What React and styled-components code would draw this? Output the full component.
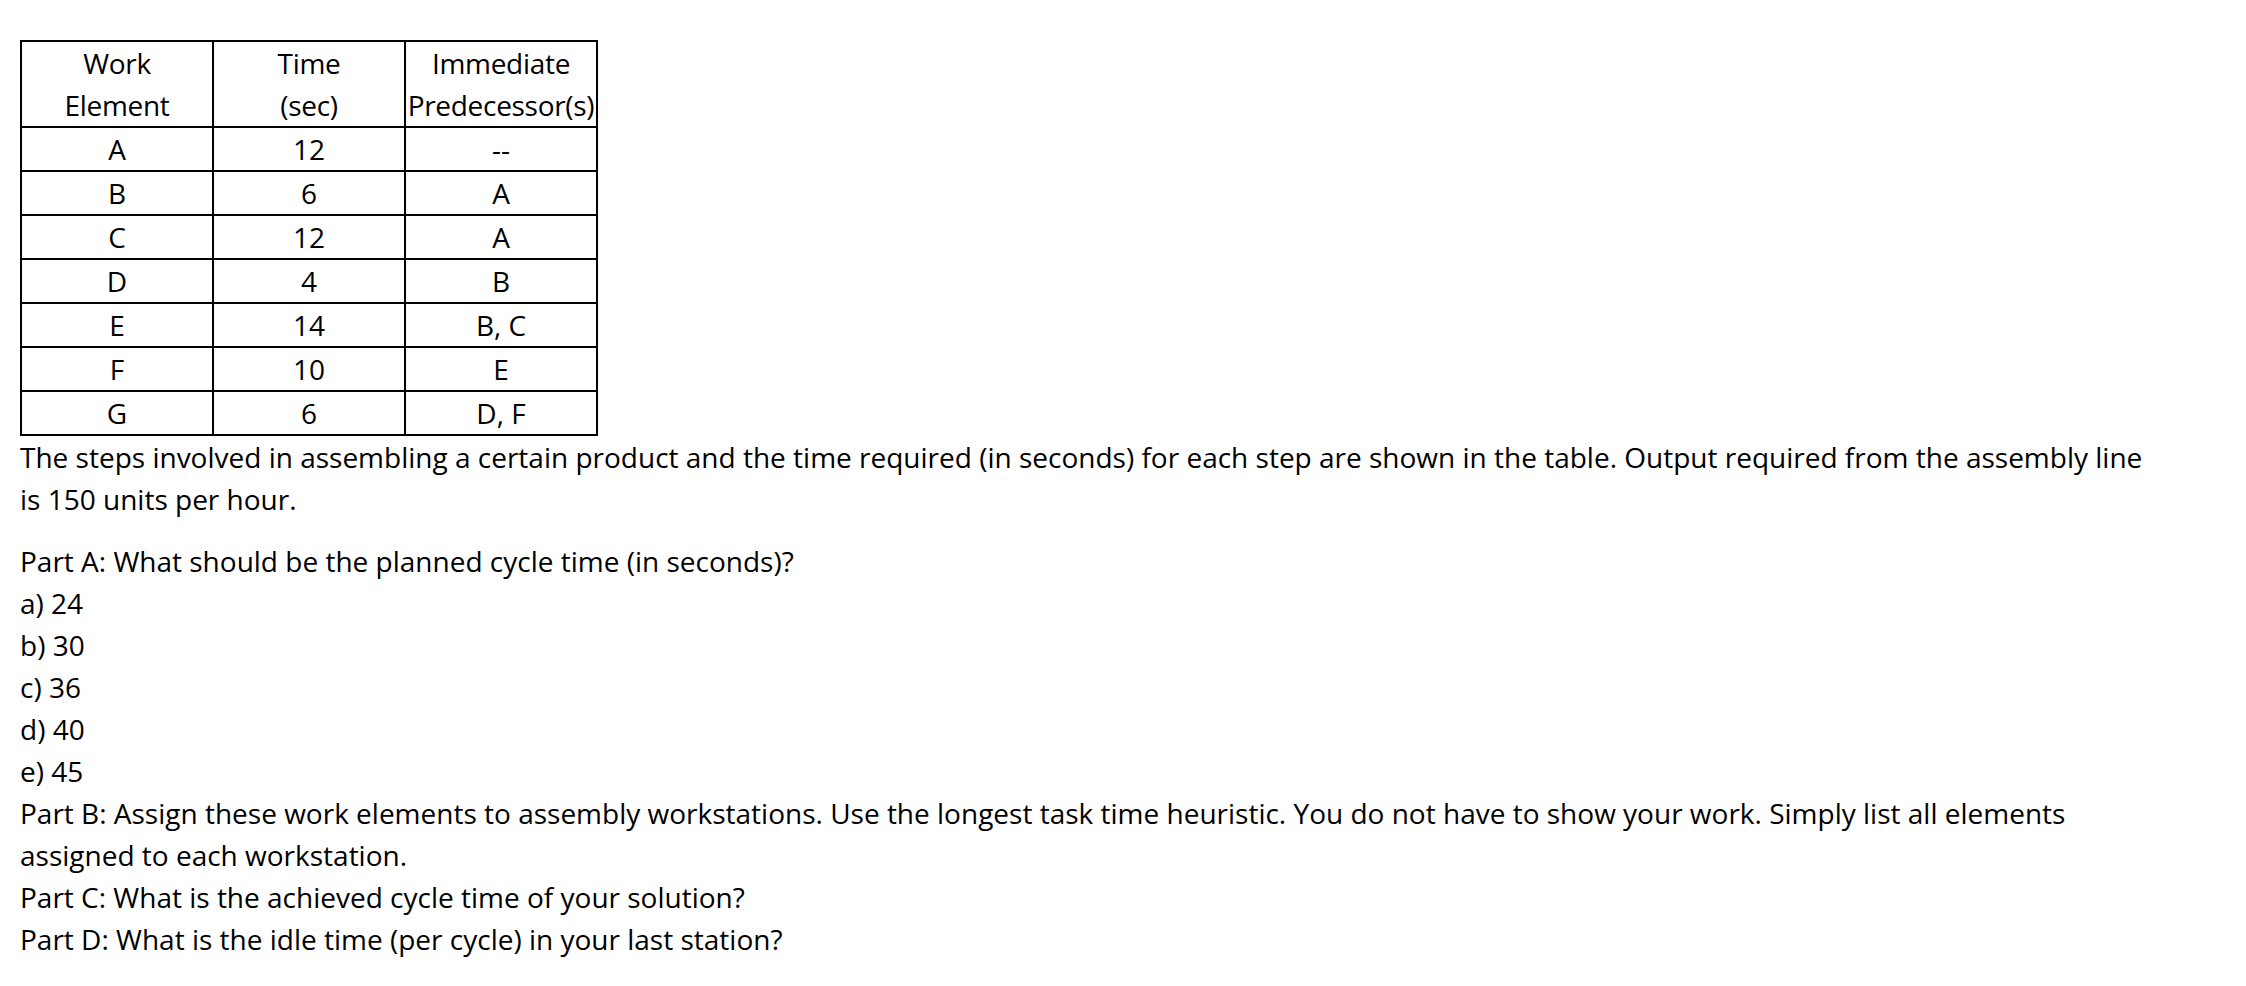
import React from 'react';
import styled, { createGlobalStyle } from 'styled-components';

const rows = [
	{ el: "A", time: "12", pred: "--" },
	{ el: "B", time: "6", pred: "A" },
	{ el: "C", time: "12", pred: "A" },
	{ el: "D", time: "4", pred: "B" },
	{ el: "E", time: "14", pred: "B, C" },
	{ el: "F", time: "10", pred: "E" },
	{ el: "G", time: "6", pred: "D, F" },
];

const choices = ["a) 24", "b) 30", "c) 36", "d) 40", "e) 45"];

const GlobalStyle = createGlobalStyle`
	html, body {
		margin: 0;
		padding: 0;
		background: #fff;
	}
`;

const App = () => {
	return (
		<>
			<GlobalStyle />
			<Page>
				<Table>
					<thead>
						<tr>
							<HeadCell>Work<br />Element</HeadCell>
							<HeadCell>Time<br />(sec)</HeadCell>
							<HeadCell>Immediate<br />Predecessor(s)</HeadCell>
						</tr>
					</thead>
					<tbody>
						{rows.map((row) => (
							<tr key={row.el}>
								<Cell>{row.el}</Cell>
								<Cell>{row.time}</Cell>
								<Cell>{row.pred}</Cell>
							</tr>
						))}
					</tbody>
				</Table>
				<Paragraph>
					The steps involved in assembling a certain product and the time required (in seconds) for each step are shown in the table. Output required from the assembly line is 150 units per hour.
				</Paragraph>
				<Block>
					<Line>Part A: What should be the planned cycle time (in seconds)?</Line>
					{choices.map((c) => <Line key={c}>{c}</Line>)}
					<Line>Part B: Assign these work elements to assembly workstations. Use the longest task time heuristic. You do not have to show your work. Simply list all elements assigned to each workstation.</Line>
					<Line>Part C: What is the achieved cycle time of your solution?</Line>
					<Line>Part D: What is the idle time (per cycle) in your last station?</Line>
				</Block>
			</Page>
		</>
	);
};

const Page = styled.div`
	width: 2140px;
	padding: 40px 0 0 20px;
	box-sizing: content-box;
	font-family: "Open Sans", "Liberation Sans", sans-serif;
	font-size: 28px;
	line-height: 42px;
	color: #000;
`;

const Table = styled.table`
	border-collapse: collapse;
	table-layout: fixed;
	width: 576px;
`;

const HeadCell = styled.th`
	width: 190px;
	height: 84px;
	padding: 0;
	border: 2px solid #000;
	font-weight: 400;
	font-size: 28px;
	line-height: 42px;
	text-align: center;
	white-space: nowrap;
	letter-spacing: -0.3px;
`;

const Cell = styled.td`
	height: 42px;
	padding: 0;
	border: 2px solid #000;
	font-size: 28px;
	line-height: 42px;
	text-align: center;
`;

const Paragraph = styled.p`
	margin: 0 0 20px;
`;

const Block = styled.div`
	display: flex;
	flex-direction: column;
`;

const Line = styled.div``;

export default App;
